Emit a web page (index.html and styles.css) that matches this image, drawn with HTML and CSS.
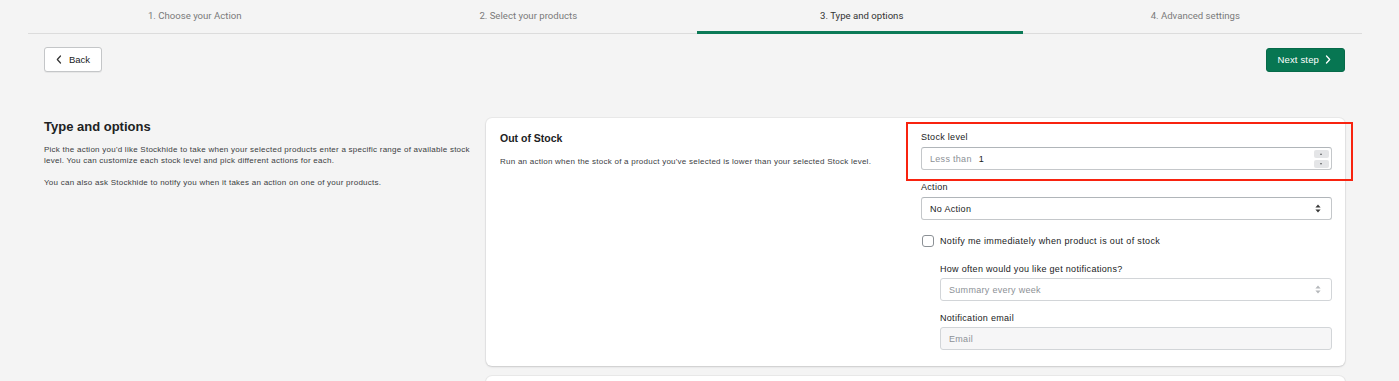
FILE: index.html
```html
<!DOCTYPE html>
<html lang="en">
<head>
<meta charset="utf-8">
<title>Type and options</title>
<link rel="stylesheet" href="styles.css">
</head>
<body>
<nav class="tabs">
  <div class="tab">1. Choose your Action</div>
  <div class="tab">2. Select your products</div>
  <div class="tab tab-active">3. Type and options</div>
  <div class="tab">4. Advanced settings</div>
</nav>

<div class="toolbar">
  <button class="btn btn-back" type="button">
    <svg class="chev" width="6" height="9" viewBox="0 0 6 9"><path d="M4.5 1 1.3 4.5 4.5 8" fill="none" stroke="#333" stroke-width="1.2" stroke-linecap="round" stroke-linejoin="round"/></svg>
    Back
  </button>
  <button class="btn btn-next" type="button">
    Next step
    <svg class="chev" width="6" height="9" viewBox="0 0 6 9"><path d="M1.5 1 4.7 4.5 1.5 8" fill="none" stroke="#fff" stroke-width="1.3" stroke-linecap="round" stroke-linejoin="round"/></svg>
  </button>
</div>

<main class="layout">
  <section class="intro">
    <h1 class="intro-title">Type and options</h1>
    <p class="intro-text">Pick the action you'd like Stockhide to take when your selected products enter a specific range of available stock level. You can customize each stock level and pick different actions for each.</p>
    <p class="intro-text">You can also ask Stockhide to notify you when it takes an action on one of your products.</p>
  </section>

  <div class="cards">
    <section class="card">
      <div class="card-info">
        <h2 class="card-title">Out of Stock</h2>
        <p class="card-text">Run an action when the stock of a product you've selected is lower than your selected Stock level.</p>
      </div>
      <div class="card-form">
        <div class="field field-highlighted">
          <span class="highlight"></span>
          <label class="label">Stock level</label>
          <div class="input input-number">
            <span class="prefix">Less than</span>
            <span class="value">1</span>
            <span class="spinner">
              <span class="spin spin-up"></span>
              <span class="spin spin-down"></span>
            </span>
          </div>
        </div>

        <div class="field">
          <label class="label">Action</label>
          <div class="input select">
            <span class="value">No Action</span>
            <svg class="updown" width="6" height="9" viewBox="0 0 6 9"><path d="M3 0.5 5.6 3.6H0.4Z M3 8.5 0.4 5.4H5.6Z" fill="#3a3a3a"/></svg>
          </div>
        </div>

        <div class="check-row">
          <span class="checkbox"></span>
          <span class="check-label">Notify me immediately when product is out of stock</span>
        </div>

        <div class="sub-fields">
          <div class="field">
            <label class="label">How often would you like get notifications?</label>
            <div class="input select select-disabled">
              <span class="value">Summary every week</span>
              <svg class="updown" width="6" height="9" viewBox="0 0 6 9"><path d="M3 0.5 5.6 3.6H0.4Z M3 8.5 0.4 5.4H5.6Z" fill="#b5b8bb"/></svg>
            </div>
          </div>
          <div class="field">
            <label class="label">Notification email</label>
            <div class="input input-disabled">
              <span class="placeholder">Email</span>
            </div>
          </div>
        </div>
      </div>
    </section>
    <section class="card card-next"></section>
  </div>
</main>
</body>
</html>
```

FILE: styles.css
```css
* { box-sizing: border-box; }

html, body {
  margin: 0;
  padding: 0;
  background: #f4f4f4;
  height: 100%;
  overflow: hidden;
}

body {
  font-family: "Liberation Sans", Arial, sans-serif;
  color: #202223;
}

/* Tabs */
.tabs {
  display: grid;
  grid-template-columns: repeat(4, 1fr);
  margin: 0 37px 0 28px;
  border-bottom: 1px solid #dcdcdc;
}

.tab {
  position: relative;
  height: 33px;
  padding-top: 10px;
  text-align: center;
  font-family: Roboto, "Liberation Sans", sans-serif;
  font-size: 9.6px;
  line-height: 12px;
  color: #7a7a7a;
}

.tab-active {
  color: #333;
}

.tab-active::after {
  content: "";
  position: absolute;
  left: 2px;
  right: 6px;
  bottom: -1px;
  height: 3px;
  background: #0b7a57;
}

/* Toolbar */
.toolbar {
  display: flex;
  justify-content: space-between;
  align-items: center;
  padding: 0 54px 0 44px;
  margin-top: 13px;
}

.btn {
  display: inline-flex;
  align-items: center;
  gap: 7px;
  height: 25px;
  border-radius: 3px;
  font-family: "Liberation Sans", Arial, sans-serif;
  font-size: 9.5px;
  cursor: pointer;
}

.btn-back {
  padding: 0 11px 0 11px;
  background: #fff;
  border: 1px solid #c4c6c8;
  color: #202223;
  box-shadow: 0 1px 0 rgba(0,0,0,0.05);
}

.btn-next {
  height: 24px;
  padding: 0 13px 0 11px;
  gap: 6px;
  background: #077652;
  border: 1px solid #066a49;
  color: #fff;
  font-weight: 500;
  letter-spacing: 0.15px;
}

/* Main layout */
.layout {
  display: grid;
  grid-template-columns: 430px 1fr;
  gap: 12px;
  padding: 0 54px 0 44px;
  margin-top: 46px;
}

.intro-title {
  margin: 1px 0 10px;
  font-size: 13px;
  line-height: 16px;
  font-weight: 600;
  color: #202223;
}

.intro-text {
  margin: 0 0 12px;
  font-size: 8px;
  line-height: 10.5px;
  letter-spacing: 0.25px;
  color: #3b3d3f;
}

.cards {
  display: flex;
  flex-direction: column;
  gap: 10px;
}

.card {
  display: grid;
  grid-template-columns: 1fr 411px;
  gap: 15px;
  padding: 14px 13px 16px 14px;
  background: #fff;
  border-radius: 6px;
  box-shadow: 0 0 0 1px rgba(63,63,68,0.05), 0 1px 2px rgba(63,63,68,0.18);
}

.card-next {
  height: 40px;
}

.card-title {
  margin: 0 0 12px;
  font-size: 10.5px;
  line-height: 13px;
  font-weight: 600;
  color: #202223;
}

.card-text {
  margin: 0;
  font-size: 8px;
  line-height: 10px;
  letter-spacing: 0.25px;
  color: #3b3d3f;
}

/* Form */
.card-form {
  display: flex;
  flex-direction: column;
}

.field {
  display: flex;
  flex-direction: column;
  margin-bottom: 11px;
}

.field-highlighted {
  position: relative;
  margin-bottom: 12px;
}

.highlight {
  position: absolute;
  top: -10px;
  left: -15px;
  right: -21px;
  bottom: -11px;
  border: 2px solid #f8230f;
  pointer-events: none;
}

.label {
  font-size: 9px;
  line-height: 11px;
  margin-bottom: 4px;
  letter-spacing: 0.3px;
  color: #202223;
}

.input {
  position: relative;
  display: flex;
  align-items: center;
  height: 23px;
  padding: 0 8px;
  background: #fff;
  border: 1px solid #c4c7ca;
  border-top-color: #b0b5b9;
  border-radius: 3px;
  font-size: 9px;
  letter-spacing: 0.3px;
  color: #202223;
}

.input-number {
  height: 23px;
}

.prefix {
  color: #8c9196;
  margin-right: 7px;
}

.value {
  flex: 1;
}

.spinner {
  display: flex;
  flex-direction: column;
  gap: 2px;
  margin-right: -6px;
}

.spin {
  position: relative;
  width: 15px;
  height: 8px;
  background: #e4e5e7;
  border-radius: 2px;
}

.spin::after {
  content: "";
  position: absolute;
  left: 6px;
  top: 3px;
  border-left: 1.5px solid transparent;
  border-right: 1.5px solid transparent;
}

.spin-up::after {
  border-bottom: 2px solid #5c5f62;
}

.spin-down::after {
  border-top: 2px solid #5c5f62;
}

.updown {
  margin-right: 2px;
}

.select-disabled {
  color: #8c9196;
  border-color: #d2d5d8;
}

.input-disabled {
  background: #f6f6f7;
  border-color: #d2d5d8;
}

.placeholder {
  color: #8c9196;
}

.check-row {
  display: flex;
  align-items: center;
  gap: 6px;
  margin: 4px 0 17px 1px;
}

.checkbox {
  width: 12px;
  height: 12px;
  border: 1px solid #8c9196;
  border-radius: 3px;
  background: #fff;
}

.check-label {
  font-size: 9px;
  line-height: 12px;
  letter-spacing: 0.35px;
  color: #202223;
}

.sub-fields {
  padding-left: 19px;
}

.sub-fields .label {
  margin-bottom: 3px;
}

.sub-fields .field {
  margin-bottom: 12px;
}

.sub-fields .field:last-child {
  margin-bottom: 0;
}
```
